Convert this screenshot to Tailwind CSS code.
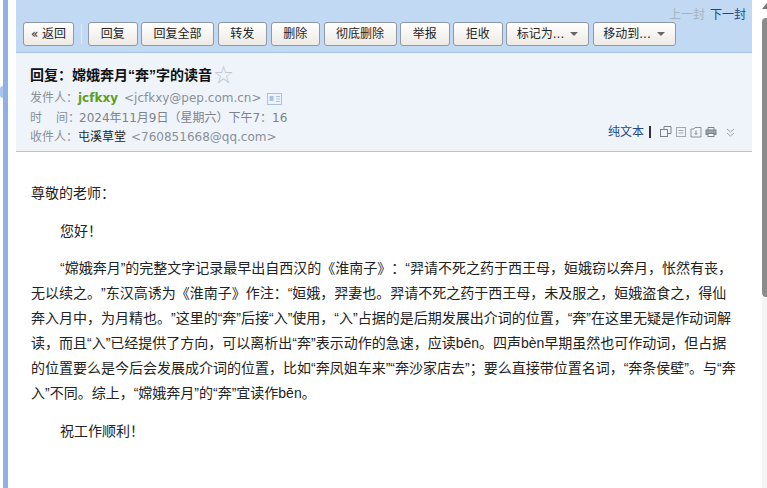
<!DOCTYPE html>
<html lang="zh">
<head>
<meta charset="UTF-8">
<title>回复&#65306;嫦娥奔月“奔”字的读音</title>
<script src="https://cdn.jsdelivr.net/npm/@tailwindcss/browser@4"></script>
</head>
<body class="h-[488px] w-[767px] overflow-hidden bg-white [text-spacing-trim:space-all] font-['DejaVu_Sans','Noto_Sans_CJK_SC',sans-serif]">
<div class="flex h-full">
  <!-- left rail -->
  <div class="w-[3px] shrink-0 bg-white relative">
    <div class="absolute left-0 top-[86px] w-[3px] h-[12px] bg-[#a9c4ec] rounded-l-sm"></div>
  </div>
  <div class="w-[5px] shrink-0 bg-[#8fb1e6]"></div>
  <div class="w-[8px] shrink-0 bg-white"></div>

  <!-- mail -->
  <div class="w-[736px] shrink-0">
    <div class="h-[53px] bg-[#c1d9f3] border-b border-[#a9c4e0] flex flex-col">
      <div class="h-[22px] flex justify-end items-start pt-[8px] pr-[6px] text-[12px] leading-[14px] gap-[5px]">
        <span class="text-[#a8b4c0]">上一封</span>
        <span class="text-[#1e4a86]">下一封</span>
      </div>
      <div class="flex items-center pl-[7px] text-[12px] text-[#222]">
        <button class="h-[24px] w-[51px] rounded-[3px] border border-[#8d99a6] bg-gradient-to-b from-white to-[#eeeae4]">« 返回</button>
        <div class="w-px h-[20px] bg-[#e3edf7] ml-[7px] mr-[6px]"></div>
        <div class="flex gap-[3.5px]">
          <button class="h-[24px] w-[49.5px] rounded-[3px] border border-[#8d99a6] bg-gradient-to-b from-white to-[#eeeae4]">回复</button>
          <button class="h-[24px] w-[73px] rounded-[3px] border border-[#8d99a6] bg-gradient-to-b from-white to-[#eeeae4]">回复全部</button>
          <button class="h-[24px] w-[49.5px] rounded-[3px] border border-[#8d99a6] bg-gradient-to-b from-white to-[#eeeae4]">转发</button>
          <button class="h-[24px] w-[49.5px] rounded-[3px] border border-[#8d99a6] bg-gradient-to-b from-white to-[#eeeae4]">删除</button>
          <button class="h-[24px] w-[73px] rounded-[3px] border border-[#8d99a6] bg-gradient-to-b from-white to-[#eeeae4]">彻底删除</button>
          <button class="h-[24px] w-[49.5px] rounded-[3px] border border-[#8d99a6] bg-gradient-to-b from-white to-[#eeeae4]">举报</button>
          <button class="h-[24px] w-[49.5px] rounded-[3px] border border-[#8d99a6] bg-gradient-to-b from-white to-[#eeeae4]">拒收</button>
          <button class="h-[24px] w-[83px] rounded-[3px] border border-[#8d99a6] bg-gradient-to-b from-white to-[#eeeae4] flex items-center justify-center gap-[6px]">标记为...<span class="w-0 h-0 border-x-[4px] border-x-transparent border-t-[4px] border-t-[#666]"></span></button>
          <button class="h-[24px] w-[83px] rounded-[3px] border border-[#8d99a6] bg-gradient-to-b from-white to-[#eeeae4] flex items-center justify-center gap-[6px]">移动到...<span class="w-0 h-0 border-x-[4px] border-x-transparent border-t-[4px] border-t-[#666]"></span></button>
        </div>
      </div>
    </div>

    <!-- header -->
    <div class="h-[99px] bg-[#eff4fb] border-b border-[#b7c6d6] pl-[14px] pr-[14px] pt-[12px] relative">
      <div class="flex items-center h-[20px] text-[14px] font-bold text-[#111] font-['Liberation_Sans','Noto_Sans_CJK_SC',sans-serif]">回复&#65306;嫦娥奔月“奔”字的读音<span class="ml-[2px] text-[19px] font-normal text-[#bcc5d0] leading-none">☆</span></div>
      <div class="mt-[4px] text-[12px] leading-[19.500px] text-[#8a8f96]">
        <div class="flex items-center"><span class="w-[48px] shrink-0 whitespace-nowrap">发件人&#65306;</span><span class="font-bold text-[#5f9e1c]">jcfkxy</span><span class="ml-[6px]">&lt;jcfkxy@pep.com.cn&gt;</span>
          <svg class="ml-[5px]" width="15" height="12" viewBox="0 0 15 12" fill="none" stroke="#a9c2de"><rect x="0.5" y="0.5" width="14" height="11"/><rect x="2.5" y="3" width="4" height="5" fill="#a9c2de" stroke="none"/><path d="M9 3.5h4M9 6h4M9 8.5h4"/></svg>
        </div>
        <div class="flex items-center"><span class="w-[49px] shrink-0 whitespace-nowrap">时<span class="inline-block w-[14px]"></span>间&#65306;</span><span class="text-[12px] text-[#7d8288]">2024年11月9日&#65288;星期六&#65289;下午7&#65306;16</span></div>
        <div class="flex items-center"><span class="w-[48px] shrink-0 whitespace-nowrap">收件人&#65306;</span><span class="text-[#222]">屯溪草堂</span><span class="ml-[5px]">&lt;760851668@qq.com&gt;</span></div>
      </div>
      <div class="absolute right-[17px] bottom-[12px] flex items-center h-[14px] text-[12px] text-[#1e4a86]">
        <span>纯文本</span>
        <span class="w-[2px] h-[12px] bg-[#333] ml-[5px] mr-[9px]"></span>
        <div class="flex items-center gap-[3px]">
          <svg width="12" height="12" viewBox="0 0 12 12" fill="none" stroke="#78808a"><rect x="0.5" y="3.5" width="7" height="7"/><path d="M4 3V0.5h7V7.500H8"/></svg>
          <svg width="12" height="12" viewBox="0 0 12 12" fill="none" stroke="#a0a8b2"><rect x="1.5" y="1.5" width="9" height="9"/><path d="M3.500 4.500h5M3.500 7h5"/></svg>
          <svg width="12" height="12" viewBox="0 0 12 12" fill="none" stroke="#8a929c"><path d="M1 3h3l1-1.500h6V11H1zM6 4.500v4M4.500 7l1.500 1.500L7.500 7"/></svg>
          <svg width="12" height="12" viewBox="0 0 12 12" fill="none" stroke="#78808a"><path d="M3 4V1.500h6V4"/><rect x="1" y="4" width="10" height="4.500" fill="#9aa2ac"/><rect x="3" y="7.500" width="6" height="3" fill="#fff"/></svg>
        </div>
        <svg class="ml-[9px]" width="9" height="9" viewBox="0 0 9 9" fill="none" stroke="#9aa2ac"><path d="M1 1l3.500 3 3.500-3M1 5l3.500 3 3.500-3"/></svg>
      </div>
    </div>

    <!-- body -->
    <div class="pl-[15px] pt-[31px] text-[14px] leading-[20px] text-[#222] font-['Liberation_Sans','Noto_Sans_CJK_SC',sans-serif]">
      <p>尊敬的老师&#65306;</p>
      <p class="mt-[18px] indent-[29px]">您好&#65281;</p>
      <p class="mt-[15px] indent-[29px] leading-[25px] whitespace-nowrap">“嫦娥奔月”的完整文字记录最早出自西汉的《淮南子》&#65306;“羿请不死之药于西王母&#65292;姮娥窃以奔月&#65292;怅然有丧&#65292;<br>无以续之。”东汉高诱为《淮南子》作注&#65306;“姮娥&#65292;羿妻也。羿请不死之药于西王母&#65292;未及服之&#65292;姮娥盗食之&#65292;得仙<br>奔入月中&#65292;为月精也。”这里的“奔”后接“入”使用&#65292;“入”占据的是后期发展出介词的位置&#65292;“奔”在这里无疑是作动词解<br>读&#65292;而且“入”已经提供了方向&#65292;可以离析出“奔”表示动作的急速&#65292;应读bēn。四声bèn早期虽然也可作动词&#65292;但占据<br>的位置要么是今后会发展成介词的位置&#65292;比如“奔凤姐车来”“奔沙家店去”&#65307;要么直接带位置名词&#65292;“奔条侯壁”。与“奔<br>入”不同。综上&#65292;“嫦娥奔月”的“奔”宜读作bēn。</p>
      <p class="mt-[15px] indent-[29px]">祝工作顺利&#65281;</p>
    </div>
  </div>

  <!-- scrollbar -->
  <div class="ml-[10px] w-[5px] shrink-0 flex flex-col">
    <div class="h-[18px] bg-white relative">
      <div class="absolute right-0 top-[3px] w-0 h-0 border-l-[5px] border-l-transparent border-b-[6px] border-b-[#777]"></div>
    </div>
    <div class="h-[279px] bg-[#8c8c8c] rounded-tl-sm rounded-bl-sm"></div>
    <div class="flex-1 bg-[#f5f5f5]"></div>
  </div>
</div>
</body>
</html>
